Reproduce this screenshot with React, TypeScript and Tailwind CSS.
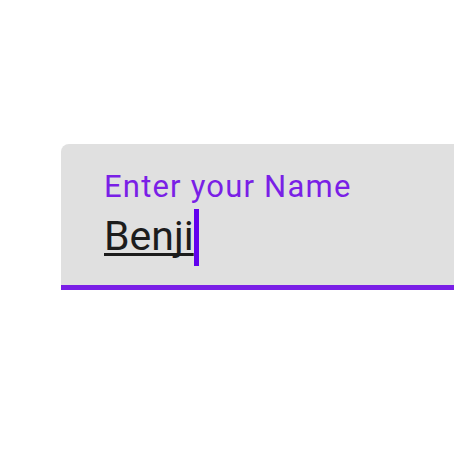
export default function App() {
  return (
    <div className="w-[454px] h-[454px] bg-white overflow-hidden pt-[144px] pl-[61px]" style={{ fontFamily: 'Roboto, "Noto Sans", sans-serif' }}>
      <div className="h-[146px] bg-[#e0e0e0] rounded-tl-[8px] border-b-[5px] border-[#7a1fe6] pl-[43px] pt-[25px]">
        <div className="text-[31px] leading-[35px] text-[#7a1fe6] tracking-[1.2px]">Enter your Name</div>
        <div className="flex items-start mt-[9px]">
          <span className="text-[41px] leading-[47px] text-[#1c1c1c] underline decoration-[3px] underline-offset-[3px] [text-decoration-skip-ink:none]">Benji</span>
          <span className="inline-block w-[5px] h-[57px] bg-[#6200ee] mt-[-4px]"></span>
        </div>
      </div>
    </div>
  );
}
